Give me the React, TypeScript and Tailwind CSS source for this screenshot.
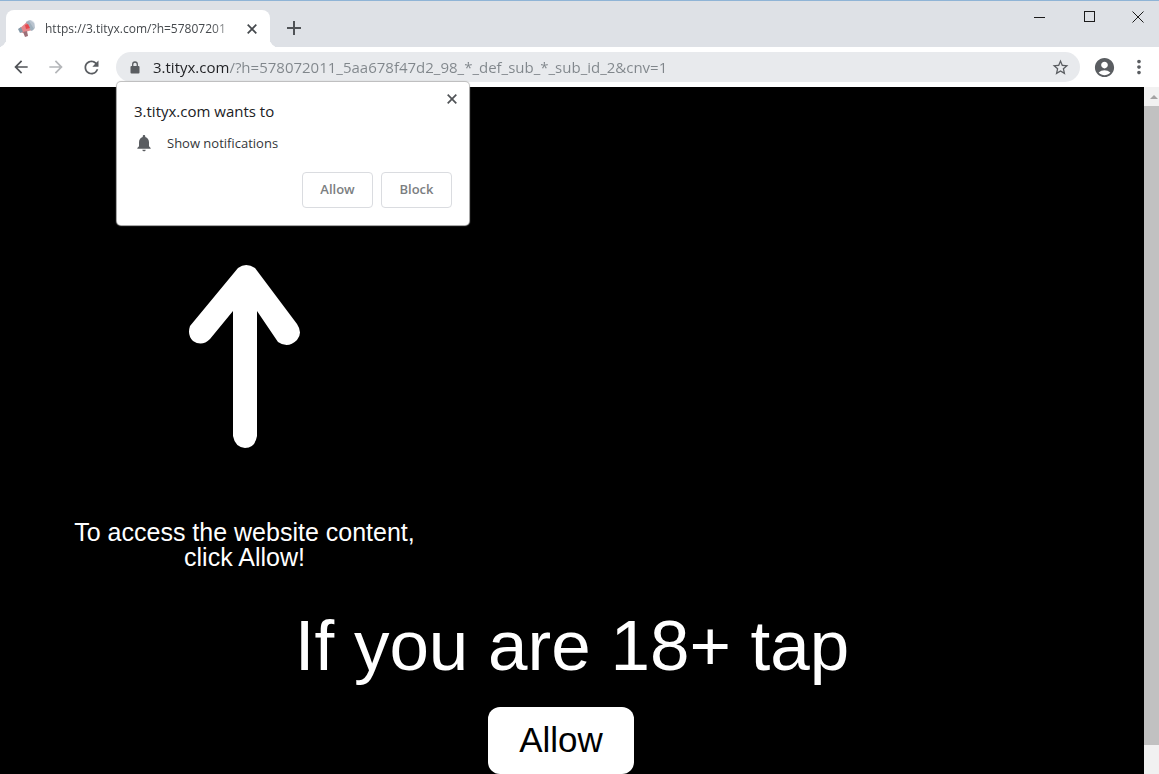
import { MdAccountCircle, MdArrowBack, MdArrowForward, MdMoreVert, MdNotifications, MdRefresh, MdStarBorder } from "react-icons/md"

function Favicon() {
  return (
    <svg viewBox="0 0 20 20" className="h-5 w-5 shrink-0" aria-hidden="true">
      <circle cx="13" cy="6" r="5" fill="#dde3ea" />
      <path d="M9 3 L13 1 L17 4 L18 9 L15 12 Z" fill="#b9c4cf" />
      <path d="M2 10 L10 3 L15 11 L5 14 Z" fill="#e4868a" />
      <path d="M9 3 L12 2 L17 10 L14 12 Z" fill="#9fb0bc" />
      <path d="M8 6 L11 5 L13 9 L9 10 Z" fill="#e8474d" />
      <path d="M1 10 L4 8 L6 13 L3 14 Z" fill="#8499a8" />
      <path d="M6 13 L10 12 L11 17 L8 18 Z" fill="#9c6f78" />
    </svg>
  )
}

function CrossIcon() {
  return (
    <svg viewBox="0 0 10 10" className="h-[10px] w-[10px]" stroke="currentColor" strokeWidth="1.7">
      <path d="M0.7 0.7L9.3 9.3M9.3 0.7L0.7 9.3" />
    </svg>
  )
}

function LockIcon() {
  return (
    <svg viewBox="0 0 10 13" className="h-[13px] w-[10px] shrink-0" aria-hidden="true">
      <rect x="0.5" y="5" width="9" height="7.5" rx="1" fill="currentColor" />
      <path d="M2.7 5.5V3.3a2.3 2.3 0 0 1 4.6 0v2.2" fill="none" stroke="currentColor" strokeWidth="1.3" />
    </svg>
  )
}

function TitleBar() {
  return (
    <header className="flex h-[47px] shrink-0 justify-between border-t border-[#8fb4d6] bg-[#dee1e6]">
      <div className="flex items-end pl-[6px]">
        <div className="relative flex h-[37px] w-[264px] items-center rounded-t-lg bg-white pr-[13px] pl-[11px]">
          <span className="absolute bottom-0 -left-2 h-2 w-2 rounded-br-lg shadow-[3px_3px_0_0_#fff] [clip-path:inset(0)]" />
          <span className="absolute -right-2 bottom-0 h-2 w-2 rounded-bl-lg shadow-[-3px_3px_0_0_#fff] [clip-path:inset(0)]" />
          <Favicon />
          <span className="ml-2 flex-1 text-xs whitespace-nowrap text-[#45494d] [mask-image:linear-gradient(to_right,#000_165px,transparent_200px)]">
            https://3.tityx.com/?h=57807201
          </span>
          <button aria-label="Close tab" className="text-[#45494d]">
            <CrossIcon />
          </button>
        </div>
        <button aria-label="New tab" className="mb-3 ml-[17px] text-[#505357]">
          <svg viewBox="0 0 14 14" className="h-[14px] w-[14px]" stroke="currentColor" strokeWidth="2">
            <path d="M7 0V14M0 7H14" />
          </svg>
        </button>
      </div>

      <div className="flex items-start text-[#1b1b1b]">
        <button aria-label="Minimize" className="flex h-8 w-[50px] items-center justify-center">
          <svg viewBox="0 0 12 12" className="h-3 w-3" stroke="currentColor" shapeRendering="crispEdges">
            <path d="M0 6.5H11" />
          </svg>
        </button>
        <button aria-label="Maximize" className="flex h-8 w-[50px] items-center justify-center">
          <svg viewBox="0 0 12 12" className="h-3 w-3" stroke="currentColor" fill="none" shapeRendering="crispEdges">
            <rect x="0.5" y="0.5" width="10" height="10" />
          </svg>
        </button>
        <button aria-label="Close window" className="flex h-8 w-[44px] items-center justify-center pl-px">
          <svg viewBox="0 0 12 12" className="h-3 w-3" stroke="currentColor">
            <path d="M0.5 0.5L11.5 11.5M11.5 0.5L0.5 11.5" />
          </svg>
        </button>
      </div>
    </header>
  )
}

function Toolbar() {
  return (
    <nav className="flex h-10 shrink-0 items-center bg-white pr-[9px] pl-[11px] text-[#5a5d61]">
      <button aria-label="Back" className="text-[#505357]">
        <MdArrowBack size={20} />
      </button>
      <button aria-label="Forward" className="ml-[15px] text-[#b4b6b9]">
        <MdArrowForward size={20} />
      </button>
      <button aria-label="Reload" className="ml-[15px]">
        <MdRefresh size={21} />
      </button>
      <div className="ml-[14px] flex h-[30px] flex-1 items-center rounded-full bg-[#e8eaed] pr-[10px] pl-[14px]">
        <LockIcon />
        <input
          aria-label="Address"
          defaultValue="3.tityx.com/?h=578072011_5aa678f47d2_98_*_def_sub_*_sub_id_2&cnv=1"
          className="ml-[13px] min-w-0 flex-1 bg-[linear-gradient(to_right,#202124_76px,#80868b_76px)] bg-clip-text text-[15px] text-transparent outline-none"
        />
        <button aria-label="Bookmark this page">
          <MdStarBorder size={19} />
        </button>
      </div>
      <button aria-label="Profile" className="ml-[13px]">
        <MdAccountCircle size={23} />
      </button>
      <button aria-label="Menu" className="ml-3">
        <MdMoreVert size={22} />
      </button>
    </nav>
  )
}

function PermissionPrompt() {
  return (
    <div
      role="dialog"
      aria-label="Permission request"
      className="absolute top-[82px] left-[117px] z-10 h-[143px] w-[352px] rounded-sm bg-white px-[17px] pt-[17px] shadow-[0_0_1px_1px_#bbb]"
    >
      <button aria-label="Dismiss" className="absolute top-3 right-3 text-[#505357]">
        <CrossIcon />
      </button>
      <h1 className="text-[15px] leading-6 text-[#202124]">3.tityx.com wants to</h1>
      <div className="mt-[9px] flex items-center text-[13px] leading-[22px] text-[#333639]">
        <MdNotifications size={20} className="mr-[13px] text-[#5a5d61]" />
        Show notifications
      </div>
      <div className="mt-[18px] flex justify-end gap-2 text-[13px] font-semibold text-[#7b7e81]">
        <button className="h-9 w-[71px] rounded border border-[#dadce0]">Allow</button>
        <button className="h-9 w-[71px] rounded border border-[#dadce0]">Block</button>
      </div>
    </div>
  )
}

function Scrollbar() {
  return (
    <div className="flex w-[15px] shrink-0 flex-col bg-[#f1f1f1]">
      <div className="flex h-[19px] items-center justify-center pl-1">
        <svg viewBox="0 0 8 4" className="h-1 w-2" fill="#a3a3a3">
          <path d="M0 4L4 0L8 4Z" />
        </svg>
      </div>
      <div className="h-[93%] bg-[#c1c1c1]" />
    </div>
  )
}

export default function App() {
  return (
    <div className="relative flex h-screen flex-col overflow-hidden bg-black font-['Open_Sans',sans-serif]">
      <TitleBar />
      <Toolbar />
      <PermissionPrompt />

      <div className="flex min-h-0 flex-1">
        <main className="flex-1 overflow-hidden bg-black pt-[178px] font-['Liberation_Sans',sans-serif] text-white">
          {/* Pointer to the prompt */}
          <div className="flex w-[489px] flex-col items-center">
            <svg viewBox="0 0 111 183" className="h-[183px] w-[111px]" fill="#fff">
              <path d="M49 3Q57 -3 66 3L108 59Q114 68 108 75Q99 84 89 77L68 46V171Q66 183 56 183Q46 182 44 171V46L21 74Q13 82 4 76Q-2 70 1 61Z" />
            </svg>
            <p className="mt-[72px] text-center text-[25px] leading-[25px]">
              To access the website content,
              <br />
              click Allow!
            </p>
          </div>

          {/* Age gate */}
          <div className="mt-10 flex flex-col items-center">
            <h2 className="text-[71px] leading-[72px]">If you are 18+ tap</h2>
            <button className="mt-[25px] mr-[22px] h-[67px] w-[146px] rounded-xl bg-white text-[35px] text-black">
              Allow
            </button>
          </div>
        </main>
        <Scrollbar />
      </div>
    </div>
  )
}
